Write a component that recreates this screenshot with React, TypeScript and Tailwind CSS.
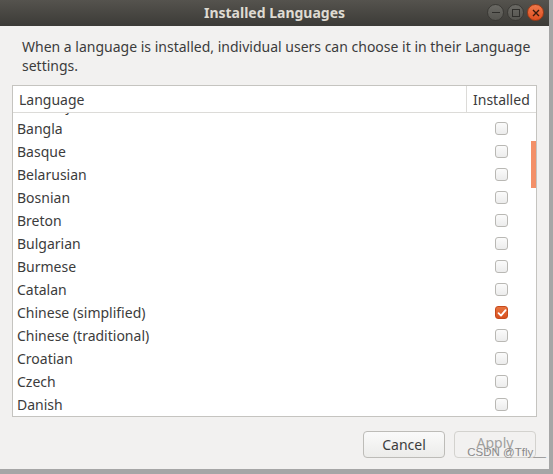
import React from "react";

const languages: { name: string; checked?: boolean }[] = [
  { name: "Azerbaijani" },
  { name: "Bangla" },
  { name: "Basque" },
  { name: "Belarusian" },
  { name: "Bosnian" },
  { name: "Breton" },
  { name: "Bulgarian" },
  { name: "Burmese" },
  { name: "Catalan" },
  { name: "Chinese (simplified)", checked: true },
  { name: "Chinese (traditional)" },
  { name: "Croatian" },
  { name: "Czech" },
  { name: "Danish" },
  { name: "Dutch" },
];

function CheckBox({ checked }: { checked?: boolean }) {
  if (checked) {
    return (
      <div className="w-[13px] h-[13px] rounded-[3px] bg-gradient-to-b from-[#e8743f] to-[#d8501f] border border-[#c64a1c] flex items-center justify-center">
        <svg width="10" height="10" viewBox="0 0 10 10">
          <path d="M1.5 5.2 L4 7.6 L8.6 2.2" stroke="#fff" strokeWidth="1.8" fill="none" strokeLinecap="round" strokeLinejoin="round" />
        </svg>
      </div>
    );
  }
  return (
    <div className="w-[13px] h-[13px] rounded-[3px] bg-gradient-to-b from-[#fbfbfb] to-[#ececec] border border-[#b9b8b4]" />
  );
}

export default function App() {
  return (
    <div className="w-[553px] h-[474px] bg-[#a6a6a6] font-['Noto_Sans',sans-serif] text-[#3c3c3c]">
      <div className="w-[549px] h-[469px] bg-[#f2f1f0] flex flex-col">
        {/* title bar */}
        <div className="relative h-[26px] bg-gradient-to-b from-[#55534e] to-[#3c3b37] flex items-center justify-center">
          <span className="text-[14px] font-bold text-[#dfdbd2] leading-none">Installed Languages</span>
          <div className="absolute right-[5px] top-[4px] flex gap-[3px]">
            <div className="w-[17px] h-[17px] rounded-full bg-gradient-to-b from-[#6a6964] to-[#55544f] border border-[#3a3935] flex items-center justify-center">
              <div className="w-[8px] h-[1.5px] bg-[#2f2e2b]" />
            </div>
            <div className="w-[17px] h-[17px] rounded-full bg-gradient-to-b from-[#6a6964] to-[#55544f] border border-[#3a3935] flex items-center justify-center">
              <div className="w-[8px] h-[8px] border-[1.5px] border-[#2f2e2b]" />
            </div>
            <div className="w-[17px] h-[17px] rounded-full bg-gradient-to-b from-[#f0784a] to-[#de4e1e] border border-[#9e3a16] flex items-center justify-center">
              <svg width="8" height="8" viewBox="0 0 8 8">
                <path d="M1 1 L7 7 M7 1 L1 7" stroke="#3a1a0c" strokeWidth="1.4" />
              </svg>
            </div>
          </div>
        </div>

        {/* description */}
        <div className="pl-[22px] pt-[11px] text-[14px] leading-[19px] whitespace-nowrap">
          When a language is installed, individual users can choose it in their Language
          <br />
          settings.
        </div>

        {/* list */}
        <div className="relative mt-[10px] ml-[12px] w-[525px] h-[332px] bg-white border border-[#c5c4c0] flex flex-col overflow-hidden">
          <div className="h-[27px] flex border-b border-[#dcdbd8] text-[14px] shrink-0">
            <div className="flex-1 pl-[6px] flex items-center">Language</div>
            <div className="w-[70px] border-l border-[#dcdbd8] pl-[6px] flex items-center">Installed</div>
          </div>
          <div className="flex-1 overflow-hidden">
            <div className="-mt-[19px]">
              {languages.map((l) => (
                <div key={l.name} className="h-[23px] flex items-center text-[14px]">
                  <div className="flex-1 pl-[4px]">{l.name}</div>
                  <div className="w-[70px] flex justify-center pl-[1px]">
                    <CheckBox checked={l.checked} />
                  </div>
                </div>
              ))}
            </div>
          </div>
          <div className="absolute right-0 top-[55px] w-[5px] h-[47px] bg-[#f39068]" />
        </div>

        {/* buttons */}
        <div className="relative flex justify-end gap-[9px] pr-[13px] mt-[14px]">
          <button className="w-[82px] h-[27px] rounded-[4px] border border-[#bdbcb8] bg-gradient-to-b from-[#fafafa] to-[#ececea] text-[14px] text-[#3c3c3c]">
            Cancel
          </button>
          <button className="w-[82px] h-[27px] rounded-[4px] border border-[#d3d2ce] bg-[#f2f1f0] text-[14px] leading-[21px] text-[#a0a09e] flex justify-center">
            Apply
          </button>
          <span className="absolute right-[3px] top-[16px] text-[11.5px] leading-none text-[#8a8a8a] font-['Liberation_Sans',sans-serif]">
            CSDN @Tfly__
          </span>
        </div>
      </div>
    </div>
  );
}
